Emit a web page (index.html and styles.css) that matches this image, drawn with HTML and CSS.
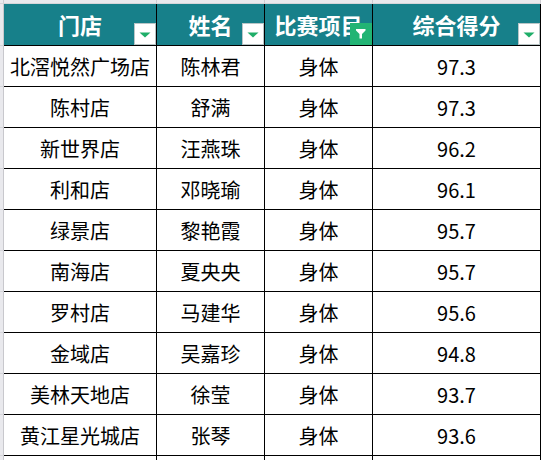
FILE: index.html
```html
<!DOCTYPE html>
<html lang="zh-CN">
<head>
    <meta charset="UTF-8">
    <meta name="viewport" content="width=device-width, initial-scale=1.0">
    <title>比赛成绩</title>
    <link rel="stylesheet" href="styles.css">
</head>
<body>
    <table class="sheet">
        <colgroup>
            <col class="col-stub">
            <col class="col-store">
            <col class="col-name">
            <col class="col-event">
            <col class="col-score">
        </colgroup>
        <thead>
            <tr class="strip">
                <th class="stub"></th>
                <th></th>
                <th></th>
                <th></th>
                <th></th>
            </tr>
            <tr class="head">
                <th class="stub"></th>
                <th>门店<span class="filter"><svg width="20" height="20" viewBox="0 0 20 20"><polygon points="4.5,8.5 15.5,8.5 10,13.5" fill="#1fae69"/></svg></span></th>
                <th>姓名<span class="filter"><svg width="20" height="20" viewBox="0 0 20 20"><polygon points="4.5,8.5 15.5,8.5 10,13.5" fill="#1fae69"/></svg></span></th>
                <th>比赛项目<span class="filter active"><svg width="22" height="22" viewBox="0 0 22 22"><polygon points="6,6 15.5,6 15.5,7.5 12,11 12,15.5 9.5,15.5 9.5,11 6,7.5" fill="#fff"/></svg></span></th>
                <th>综合得分<span class="filter"><svg width="20" height="20" viewBox="0 0 20 20"><polygon points="4.5,8.5 15.5,8.5 10,13.5" fill="#1fae69"/></svg></span></th>
            </tr>
        </thead>
        <tbody>
            <tr><td class="stub"></td><td>北滘悦然广场店</td><td>陈林君</td><td>身体</td><td>97.3</td></tr>
            <tr><td class="stub"></td><td>陈村店</td><td>舒满</td><td>身体</td><td>97.3</td></tr>
            <tr><td class="stub"></td><td>新世界店</td><td>汪燕珠</td><td>身体</td><td>96.2</td></tr>
            <tr><td class="stub"></td><td>利和店</td><td>邓晓瑜</td><td>身体</td><td>96.1</td></tr>
            <tr><td class="stub"></td><td>绿景店</td><td>黎艳霞</td><td>身体</td><td>95.7</td></tr>
            <tr><td class="stub"></td><td>南海店</td><td>夏央央</td><td>身体</td><td>95.7</td></tr>
            <tr><td class="stub"></td><td>罗村店</td><td>马建华</td><td>身体</td><td>95.6</td></tr>
            <tr><td class="stub"></td><td>金域店</td><td>吴嘉珍</td><td>身体</td><td>94.8</td></tr>
            <tr><td class="stub"></td><td>美林天地店</td><td>徐莹</td><td>身体</td><td>93.7</td></tr>
            <tr><td class="stub"></td><td>黄江星光城店</td><td>张琴</td><td>身体</td><td>93.6</td></tr>
            <tr><td class="stub"></td><td></td><td></td><td></td><td></td></tr>
        </tbody>
    </table>
</body>
</html>
```

FILE: styles.css
```css
body {
    margin: 0;
    background: #fff;
    font-family: "Noto Sans CJK SC", "Noto Sans", sans-serif;
    color: #000;
    overflow: hidden;
}

.sheet {
    border-collapse: separate;
    border-spacing: 0;
    table-layout: fixed;
    width: 541px;
}

.col-stub { width: 4px; }
.col-store { width: 153px; }
.col-name { width: 108px; }
.col-event { width: 108px; }
.col-score { width: 168px; }

.sheet th, .sheet td {
    padding: 0;
    text-align: center;
    white-space: nowrap;
    overflow: hidden;
}

/* excel column header strip */
.strip {
    height: 4px;
}

.strip th {
    background: #e9e9ed;
    border-right: 1px solid #cdcdd2;
    border-bottom: 1px solid #d6d6da;
}

.stub {
    background: #e9e9ed;
    border-right: 1px solid #c8c8cd;
    border-bottom: 1px solid #d6d6da;
}

.head {
    height: 42px;
}

.head th {
    position: relative;
    background: #17808a;
    color: #fff;
    font-size: 22px;
    font-weight: 700;
    line-height: 41px;
    border-right: 1px solid #000;
    border-bottom: 1px solid #000;
}

.head th.stub {
    background: #e9e9ed;
    border-right: 1px solid #c8c8cd;
    border-bottom: 1px solid #d6d6da;
}

.filter {
    position: absolute;
    right: 0;
    bottom: 0;
    width: 22px;
    height: 22px;
    box-sizing: border-box;
    background: #fff;
    border: 1px solid #b9c6c7;
    display: flex;
}

.filter.active {
    background: #22b474;
    border: none;
}

tbody tr {
    height: 41px;
}

tbody td {
    font-size: 20px;
    border-right: 1px solid #000;
    border-bottom: 1px solid #000;
}
```
